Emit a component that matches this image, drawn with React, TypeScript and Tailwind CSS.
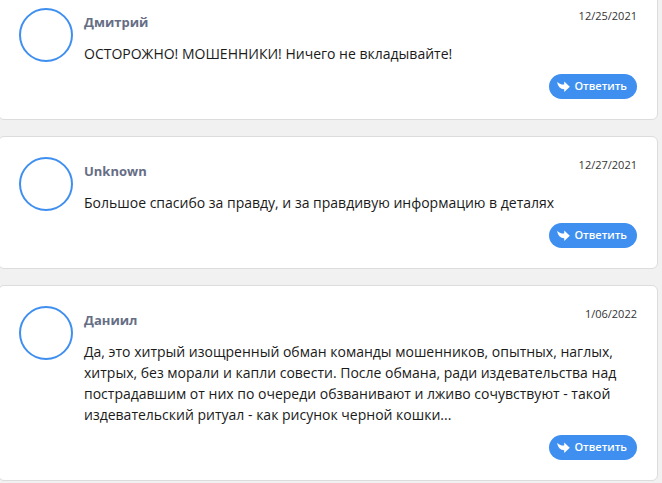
import React from 'react';

interface Comment {
  id: number;
  author: string;
  date: string;
  text: string;
}

const comments: Comment[] = [
  { id: 1, author: 'Дмитрий', date: '12/25/2021', text: 'ОСТОРОЖНО! МОШЕННИКИ! Ничего не вкладывайте!' },
  { id: 2, author: 'Unknown', date: '12/27/2021', text: 'Большое спасибо за правду, и за правдивую информацию в деталях' },
  {
    id: 3,
    author: 'Даниил',
    date: '1/06/2022',
    text: 'Да, это хитрый изощренный обман команды мошенников, опытных, наглых, хитрых, без морали и капли совести. После обмана, ради издевательства над пострадавшим от них по очереди обзванивают и лживо сочувствуют - такой издевательский ритуал - как рисунок черной кошки...',
  },
];

const ReplyIcon: React.FC = () => (
  <svg viewBox="0 0 13 11" className="w-[13px] h-[11px]" fill="currentColor" aria-hidden="true">
    <path d="M0.3 0.8C1.8 2.8 4 3.7 7.2 3.6V0.6L12.8 5.8L7.2 11V8.2C3.6 8.2 0.4 5.4 0.3 0.8Z" />
  </svg>
);

const CommentCard: React.FC<{ comment: Comment }> = ({ comment }) => (
  <article className="flex gap-[11px] p-5 bg-white border border-[#dcdcdc] rounded-md">
    <div className="w-[54px] h-[54px] shrink-0 rounded-full border-2 border-[#3f8ff0]" />

    <div className="flex-1 min-w-0 flex flex-col">
      <header className="flex justify-between items-start h-[35px]">
        <h3 className="text-[13px] leading-7 font-bold text-[#666e85]">{comment.author}</h3>
        <time className="text-[11px] leading-4 text-[#333333]">{comment.date}</time>
      </header>

      <p className="text-[14px] leading-[21px] text-[#1a1a1a]">{comment.text}</p>

      <button className="mt-2.5 self-end flex items-center gap-1 h-[25px] pl-2 pr-2.5 rounded-full bg-[#3f8ff0] text-white text-[11px] font-semibold">
        <ReplyIcon />
        Ответить
      </button>
    </div>
  </article>
);

const App: React.FC = () => (
  <main className="min-h-screen overflow-hidden bg-[#f1f1f1] font-['Open_Sans','Noto_Sans',sans-serif]">
    <div className="flex flex-col gap-4 -mt-[13px] -ml-0.5 mr-1">
      {comments.map((comment) => (
        <CommentCard key={comment.id} comment={comment} />
      ))}
    </div>
  </main>
);

export default App;
